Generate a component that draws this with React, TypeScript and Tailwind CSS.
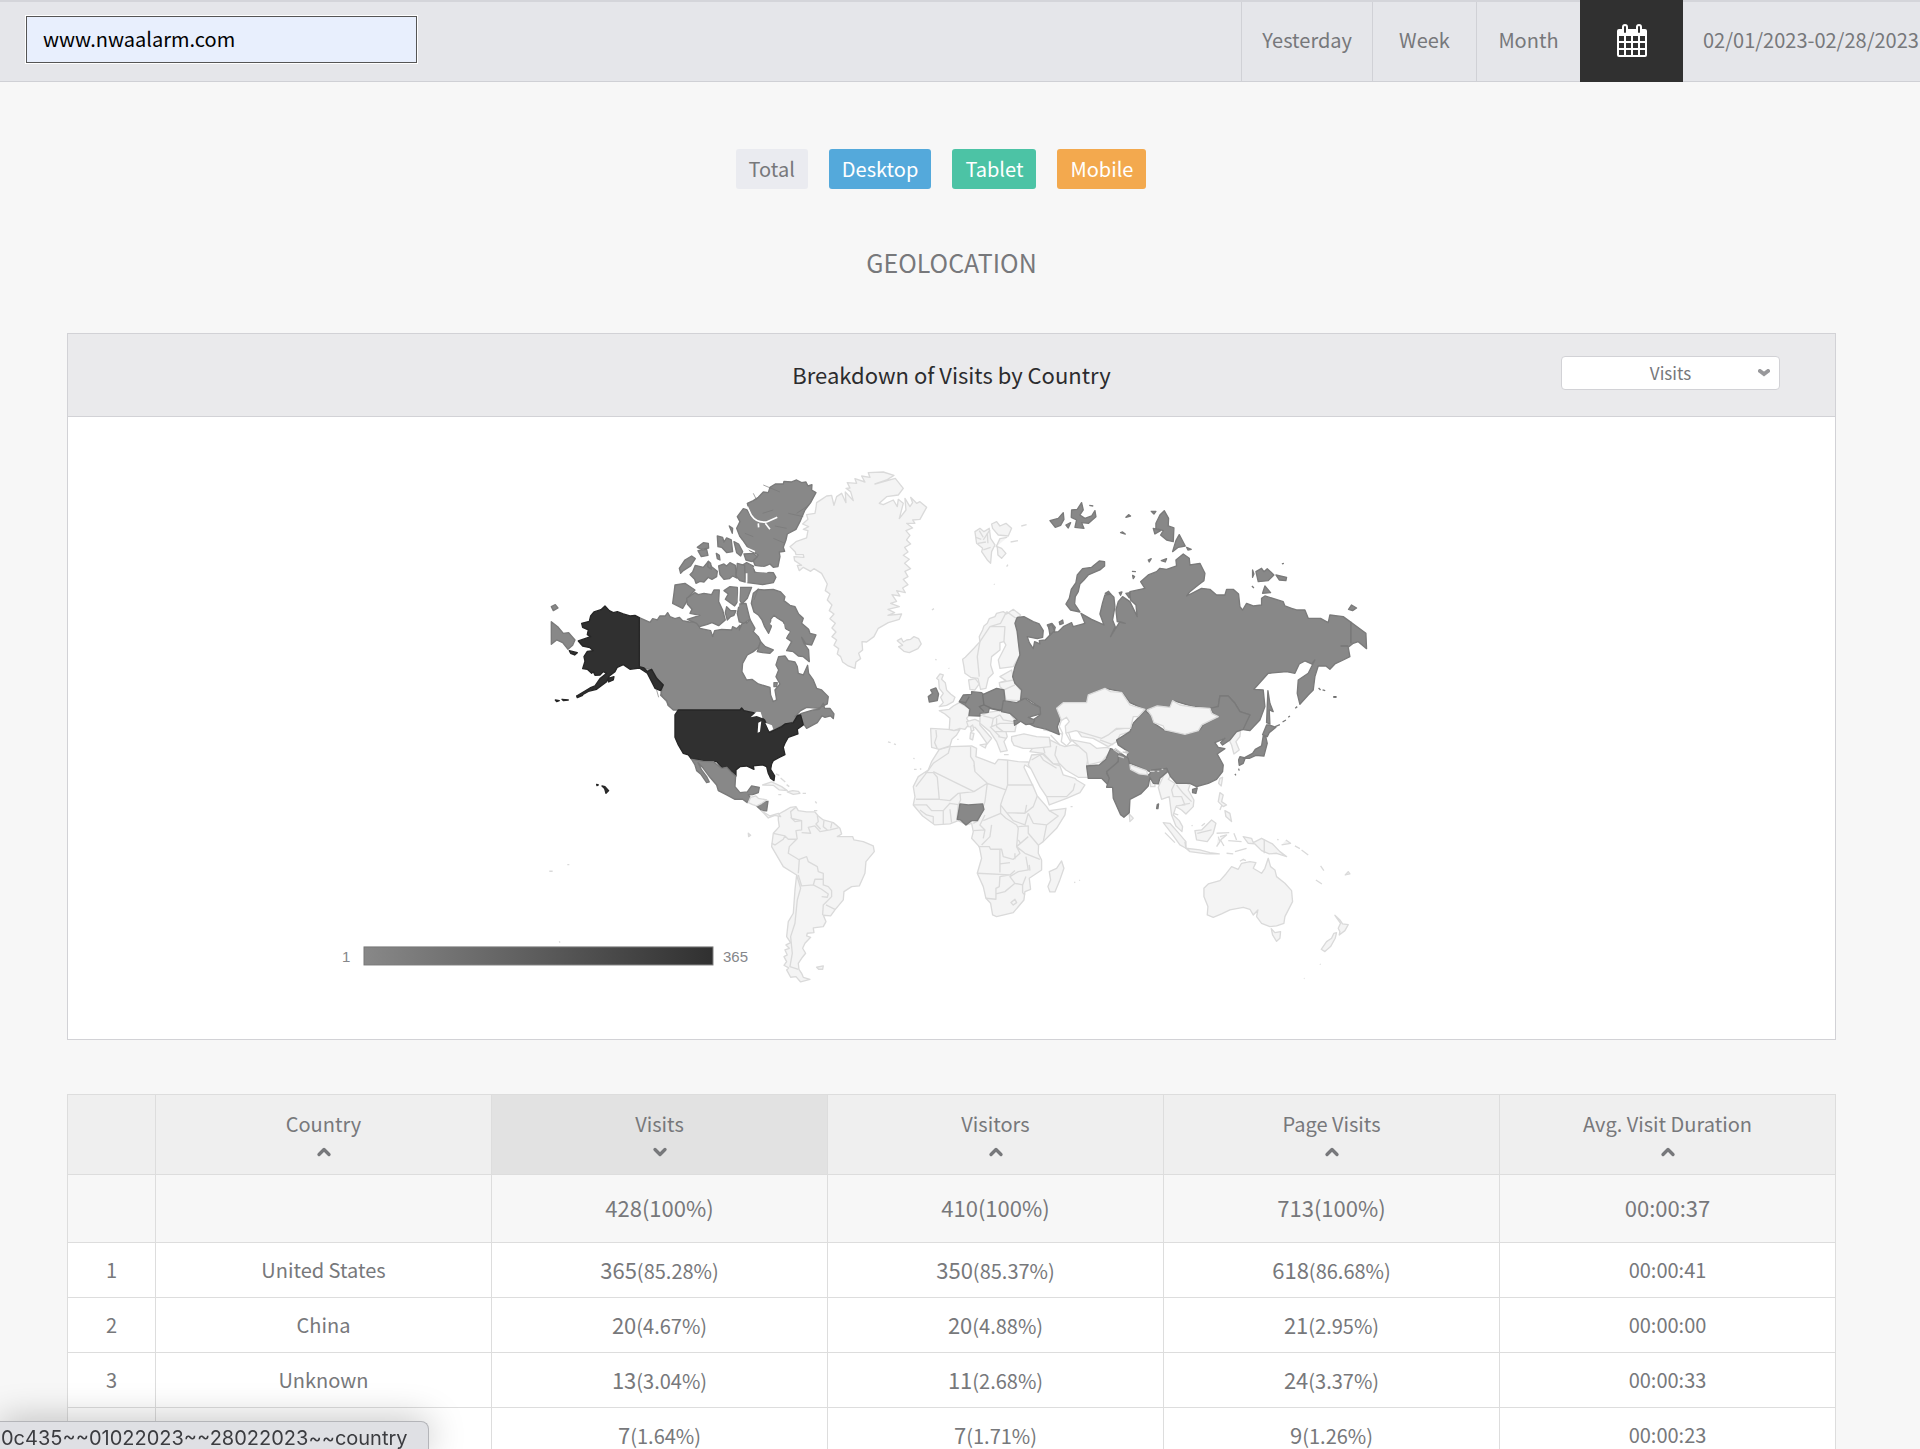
import { ChevronDown, ChevronUp } from 'lucide-react';

const ranges = ['Yesterday', 'Week', 'Month'];

const devices = [
  { label: 'Total', className: 'bg-[#eaebf0] text-[#77787b]' },
  { label: 'Desktop', className: 'bg-[#54a9db] text-white' },
  { label: 'Tablet', className: 'bg-[#4cc3a5] text-white' },
  { label: 'Mobile', className: 'bg-[#f3a94e] text-white' },
];

const columns = ['Country', 'Visits', 'Visitors', 'Page Visits', 'Avg. Visit Duration'];

const totals = ['', '428(100%)', '410(100%)', '713(100%)', '00:00:37'];

const rows = [
  { country: 'United States', visits: ['365', '85.28%'], visitors: ['350', '85.37%'], pages: ['618', '86.68%'], duration: '00:00:41' },
  { country: 'China', visits: ['20', '4.67%'], visitors: ['20', '4.88%'], pages: ['21', '2.95%'], duration: '00:00:00' },
  { country: 'Unknown', visits: ['13', '3.04%'], visitors: ['11', '2.68%'], pages: ['24', '3.37%'], duration: '00:00:33' },
  { country: '', visits: ['7', '1.64%'], visitors: ['7', '1.71%'], pages: ['9', '1.26%'], duration: '00:00:23' },
];

// North America and Greenland
const greenland =
  'M830 128L845 118 860 108 875 106 882 136 890 110 905 100 918 128 916 96 940 122 932 95 918 85 930 84 922 68 950 70 945 56 975 66 965 48 990 52 985 38 1030 36 1062 46 1040 60 1005 72 1066 55 1090 85 1075 105 1040 110 1018 130 1030 134 1060 120 1072 140 1075 118 1090 130 1078 176 1098 150 1095 115 1110 140 1118 128 1112 112 1130 130 1140 125 1160 142 1140 178 1118 180 1125 190 1100 190 1118 204 1098 212 1110 226 1100 240 1112 252 1094 262 1104 276 1090 286 1108 298 1094 310 1112 326 1095 334 1104 350 1090 358 1104 374 1088 384 1096 398 1070 392 1080 408 1056 404 1070 424 1052 430 1078 440 1044 448 1064 458 1044 466 1085 462 1078 478 1045 488 1015 505 1002 530 980 546 966 545 968 570 956 580 962 596 948 606 945 625 925 618 908 606 902 590 892 582 896 566 882 556 890 540 876 530 888 516 876 504 886 490 870 476 882 462 868 452 876 435 862 420 870 402 856 392 862 372 845 340 822 326 812 334 790 322 778 332 772 316 785 316 764 302 762 290 792 292 790 284 768 284 766 276 750 260 768 245 800 234 804 212 790 208 806 200 788 192 804 178 800 164 825 160 828 144Z';
const iceland = 'M1072 542L1084 535 1090 546 1100 540 1112 538 1122 530 1136 536 1144 552 1134 566 1108 578 1092 574 1076 560 1088 556Z';
const canada =
  'M298 473L330 487 338 476 352 480 360 468 376 468 383 458 390 470 405 476 418 472 428 482 448 486 470 484 480 505 512 512 518 530 524 512 545 508 575 510 578 500 590 506 600 496 598 510 612 478 620 490 630 478 645 505 640 515 655 530 662 545 656 562 640 575 622 585 608 610 606 635 620 660 636 658 655 672 690 682 692 705 700 725 710 720 705 690 720 672 708 650 716 630 708 615 716 590 735 588 745 602 765 606 772 620 775 640 790 645 803 616 806 640 820 660 830 685 845 690 865 710 862 732 835 745 800 742 782 752 765 770 785 760 820 750 838 748 850 730 854 745 870 745 882 762 880 776 872 768 855 772 846 768 832 788 800 805 790 790 778 764 760 785 720 800 690 818 685 795 670 775 645 765 605 752 415 750 400 750 384 736 380 722 362 706 368 680 335 630 298 622Z';
const arctic = [
  'M622 130L640 122 655 112 670 96 685 98 690 82 706 72 730 72 732 64 755 66 770 60 785 68 798 66 804 78 816 74 815 90 828 98 812 128 795 150 780 185 768 208 742 222 738 240 730 262 734 274 718 276 720 290 714 320 700 322 690 312 672 320 645 316 640 302 655 285 630 272 608 240 600 230 590 205 600 185 592 170 610 146 622 150 632 168Z',
  'M600 320L620 308 640 318 644 336 700 338 708 352 700 368 668 374 640 370 622 368 614 345Z',
  'M532 228L548 232 552 246 560 234 574 240 578 275 560 278 545 262 534 260Z',
  'M582 245L596 252 608 275 602 288 590 278Z',
  'M612 282L640 280 652 290 636 305 618 300Z',
  'M472 262L490 248 505 250 506 264 484 268Z',
  'M474 272L500 268 504 286 484 290Z',
  'M418 325L435 300 455 288 466 296 452 318 430 332 422 340Z',
  'M450 344L458 336 466 316 490 322 505 304 515 320 532 334 530 350 516 358 505 352 492 366 480 364 468 370 464 358Z',
  'M536 318L552 312 560 318 570 308 586 316 590 354 578 348 568 356 552 358 540 344Z',
  'M592 310L614 316 616 366 600 362 588 348Z',
  'M505 304L512 310 514 328 503 320Z',
  'M568 198L578 205 577 220Z',
  'M529 280L538 286 540 300 532 296Z',
  'M405 375L435 370 465 390 445 412 440 425 428 445 398 430 402 400Z',
  'M442 432L440 415 465 398 475 404 492 400 515 404 522 390 538 390 536 425 548 450 556 480 536 497 516 488 500 494 478 500 470 490 442 478 480 466 450 460 456 448Z',
  'M552 392L570 380 592 382 597 420 584 438 556 418 565 402Z',
  'M600 382L635 382 622 415 606 432 599 420Z',
  'M560 440L572 452 588 452 582 466 572 470 562 480 556 458Z',
  'M598 432L618 430 630 478 612 490 598 486 592 460Z',
  'M640 400L655 388 672 390 700 388 722 396 735 410 732 422 750 436 765 440 776 462 790 475 785 490 806 508 810 520 828 525 815 555 798 552 785 532 792 550 806 570 808 605 790 590 775 588 760 575 740 572 755 545 740 535 750 515 735 505 730 485 712 474 702 466 692 478 694 500 686 520 674 500 666 480 656 466 642 456 634 430Z',
  'M652 575L662 545 676 560 700 570 690 580 668 578Z',
  'M702 668L712 668 710 680 702 680Z',
];
const siberiaEdge = 'M34 485L55 502 70 520 86 518 105 540 98 556 84 568 68 548 50 540 34 553ZM34 440L46 434 54 444 40 452Z';
const usa =
  'M415 750H600L605 744 612 752 640 758 668 776 674 780 688 818 725 800 735 792 760 788 772 768 782 765 790 795 772 808 774 822 745 832 735 850 730 862 735 884 718 892 700 902 695 912 692 928 704 948 702 962 692 955 685 940 680 920 668 915 640 918 642 928 620 918 600 920 588 930 588 948 575 945 562 925 545 922 530 905 490 905 475 898 455 898 445 885 430 880 415 855 405 832 405 765Z';
const alaska =
  'M298 473L285 466 270 468 250 462 232 455 220 458 208 452 195 438 183 449 162 456 152 468 148 484 125 490 128 502 145 510 142 524 152 530 115 543 128 558 150 563 160 572 142 574 132 590 135 604 128 626 142 628 155 640 160 635 165 646 180 645 190 635 200 640 180 656 165 678 150 684 110 708 125 706 145 694 170 688 200 665 208 648 225 635 232 622 250 614 270 628 298 624 322 640 335 665 345 685 362 692 370 675 350 655 335 628 322 634 312 624 298 620Z M205 655L222 650 220 660 206 666Z M88 572L112 578 104 585 92 580Z M46 720L58 722 50 725Z M66 718L85 720 70 722Z M110 708L128 706 112 713Z';
const lakes =
  'M632 772L650 755 662 756 668 775 650 768Z M655 788L664 784 660 815 653 818Z M676 788L696 796 700 808 688 814 Z';

// Lower Americas
const mexico =
  'M455 208L490 214 520 215 545 235 560 232 575 248 587 258 585 290 600 308 622 306 635 288 658 292 655 308 638 314 625 315 632 324 622 338 608 328 585 328 560 315 535 302 530 285 510 262 490 235 474 218 485 240 500 260 508 276 500 278 482 252 470 242 465 225Z';
const nicaragua = 'M650 348L670 335 684 334 680 363 665 362Z';
const hawaii = 'M186 288L195 290 206 302 198 310 194 296ZM170 283L175 285 171 287Z';
const southAmerica =
  'M715 373L735 362 752 352 768 350 775 362 800 366 825 366 835 378 850 390 880 398 900 415 905 432 892 440 938 440 942 450 970 455 1000 468 1003 485 978 515 975 550 958 588 935 590 912 605 910 630 885 660 872 678 850 676 858 695 850 710 820 714 822 728 802 730 800 738 812 742 795 760 788 775 797 790 785 805 775 820 777 838 785 850 790 862 810 868 782 876 768 860 752 862 740 840 746 834 732 826 740 815 732 800 742 795 735 780 748 775 738 765 752 758 740 740 745 695 760 670 765 600 770 555 730 530 695 470 700 430 718 410 715 390Z';
const southAmericaBorders =
  'M770 555L782 595 772 630 765 700 752 740 757 790 750 830 775 838M768 352L752 365 755 385 785 392 785 420 768 422 772 448M785 428L812 430 805 412 825 408 840 425 870 420 895 414M832 376L835 395 828 402 842 418M852 392L850 410 862 420M876 398L872 415M700 430L735 438 730 448 705 465 695 460M735 438L745 448 770 448 748 470 745 490 770 505 778 510 775 550M778 508L800 500 805 515 832 530 835 545 850 550 850 568 825 568 820 585 785 588 775 555M820 585L845 598 865 612 862 622 845 620M850 568L850 585 865 590 875 602 875 620 850 645 848 675M858 645L885 658M752 382L765 395 785 392';
const caribbean = [
  'M625 338L632 322 648 318 655 325 680 330 665 340 650 348 638 344Z',
  'M665 363L690 378 715 370 722 380 705 376 685 384Z',
  'M668 285L695 276 725 290 742 302 718 300 700 286Z',
  'M742 306L758 302 775 304 780 310 760 313Z',
  'M788 310L798 310M715 314L724 314M708 252L718 256M722 264L736 276M740 284L748 290M826 334L830 340M822 362L832 362',
  'M625 430L632 436 626 440ZM28 544L38 544M82 524L88 524M58 754L60 758M1044 156L1052 158M1062 162L1068 164M830 832L850 828 848 838 836 838Z',
];

// Northern Eurasia
const russia =
  'M345 490L352 472 372 470 400 485 418 492 430 512 428 532 412 536 382 530 388 548 400 566 404 545 420 552 418 542 436 540 455 520 442 495 456 490 466 502 462 516 475 515 490 500 515 488 520 500 555 490 543 460 575 478 612 495 600 462 608 428 615 405 632 402 642 412 645 440 638 480 646 500 632 530 652 498 660 485 676 490 652 485 648 450 655 425 668 410 690 425 712 470 708 435 692 420 690 395 735 385 722 365 745 345 770 335 780 325 800 328 830 318 828 300 850 282 868 295 870 315 900 310 915 340 912 362 895 375 870 395 860 408 905 385 930 388 950 405 975 405 980 388 1000 388 1016 402 1020 440 1028 450 1040 430 1060 438 1085 435 1085 415 1095 408 1150 425 1155 438 1175 445 1190 450 1215 450 1225 475 1262 475 1285 488 1290 465 1330 470 1398 520 1400 566 1375 545 1360 550 1345 562 1350 590 1330 600 1305 612 1290 628 1278 618 1255 618 1245 650 1240 690 1225 705 1200 733 1192 700 1195 660 1225 640 1245 600 1235 612 1215 603 1198 612 1185 640 1160 635 1105 640 1062 688 1090 690 1095 740 1080 780 1050 812 1025 808 1050 765 1020 755 1005 730 985 708 960 708 955 740 930 745 880 740 820 722 805 745 735 750 705 735 690 728 665 695 615 685 565 705 560 728 500 728 470 745 482 775 472 800 478 824 440 808 405 800 385 790 420 765 420 742 380 715 362 720 365 690 345 670 338 650 345 620 360 585 355 545 352 515Z';
const russianIslands = [
  'M598 303L614 305 614 318 600 330 565 345 552 360 540 372 535 395 526 410 524 432 540 456 512 450 498 432 508 415 514 388 528 368 532 345 548 326 575 322Z',
  'M1104 692L1110 730 1120 755 1108 750 1110 792 1100 788Z',
  'M450 182L475 175 490 158 492 178 482 196 466 202ZM515 150L532 148 545 128 550 150 540 165 555 175 575 168 585 152 588 170 566 190 545 188 552 205 525 202 530 180 514 172ZM498 195L512 188 505 204Z',
  'M568 136L580 138M678 172L692 168 686 164ZM662 218L676 222 668 216ZM754 154L768 154 762 162Z',
  'M768 190L780 165 793 152 806 175 805 198 822 204 820 245 800 240 782 225 790 212 768 205ZM760 205L782 212 765 222Z',
  'M838 224L856 258 835 262 818 275 828 242ZM860 262L874 268 864 270Z',
  'M745 300L754 296 748 306ZM784 302L800 296 796 306ZM696 334L708 335M698 346L704 350 700 356Z',
  'M1068 335L1085 325 1092 335 1102 326 1122 345 1105 362 1075 365ZM1058 330L1062 342 1058 352ZM1128 345L1160 352 1158 362 1138 360ZM1095 378L1112 398 1088 400ZM1056 378L1062 384M1146 312L1152 310',
  'M1346 448L1355 435 1370 444 1358 452ZM446 500L455 492 464 512 450 525ZM478 486L488 480 490 490 480 494ZM616 400L626 394 632 402ZM658 398L666 396 662 406ZM678 400L690 398 688 414Z',
];
const japan =
  'M1100 795L1108 795 1128 802 1108 818 1102 830 1088 824ZM1090 828L1098 832 1102 850 1092 888 1068 886 1048 895 1030 895 1058 880 1066 868 1085 858ZM1020 890L1036 894 1030 910 1018 916 1016 900ZM1126 800L1140 794M1148 786L1158 780M1165 772L1170 768M1186 745L1192 740M1016 926L1018 932M1005 942L1008 946M1256 684L1262 690M1268 690L1276 692';
const china =
  'M650 840L690 815 700 790 735 752 760 770 762 790 795 812 855 823 900 810 910 795 950 772 930 745 955 740 960 708 985 708 1005 730 1020 755 1050 765 1030 808 1010 815 990 840 968 855 962 848 975 835 945 848 955 862 975 866 952 882 962 900 970 915 968 935 950 958 925 970 890 980 870 970 830 970 812 950 800 925 775 932 750 935 715 920 690 910 680 895 685 875 655 855ZM878 988L892 984 888 1000 878 998Z';
const mongolia = 'M742 750L772 738 810 742 818 722 840 735 885 742 930 745 935 760 955 770 905 795 895 812 855 823 795 810 790 798 762 788 755 768Z';
const kazakhstan =
  'M470 745L490 728 560 728 565 705 615 685 632 695 665 697 690 735 735 748 715 770 700 770 692 805 650 805 625 825 605 835 570 825 528 812 495 820 482 775Z';
const centralEurope =
  'M178 725L190 705 215 703 215 695 245 698 250 703 290 685 312 690 315 720 310 745 300 752 268 745 265 757 240 760 240 768 207 767 210 748 195 735Z';
const centralEuropeBorders = 'M208 710L195 732M248 703L252 735 238 740 252 755M252 735L275 745 305 752M178 725L200 728';
const ukraine = 'M310 722L350 728 375 715 395 730 420 742 422 762 385 772 404 780 400 790 378 794 362 784 344 796 342 782 352 780 330 760 305 755Z';
const ireland = 'M85 710L98 700 92 690 108 684 116 702 112 722 88 726Z';
const scandinavia =
  'M188 598L196 592 222 565 240 545 238 530 248 510 252 498 262 490 268 476 285 470 290 460 310 455 320 462 340 448 362 465 348 480 350 515 356 545 360 585 340 620 300 625 295 600 318 555 312 545 300 548 300 570 275 590 272 615 280 640 265 655 258 685 242 688 234 655 212 652 195 640 192 620Z';
const westEurope = [
  'M118 740L130 728 122 712 130 700 118 685 116 660 110 655 120 642 130 645 125 658 136 668 140 690 152 702 165 712 160 725 140 736Z',
  'M118 752L148 748 160 738 178 728 208 745 207 767 200 775 210 790 195 808 180 805 162 812 148 808 150 775 135 762Z',
  'M92 805L145 808 162 812 180 808 170 825 156 838 150 858 118 868 95 862Z',
  'M200 785L225 778 240 785 240 795 262 820 275 835 262 852 240 820 225 802 205 800Z',
  'M206 660L226 656 238 672 225 690 210 688Z',
  'M300 650L335 630 340 652 345 670 365 695 360 722 318 720 312 690 300 680 298 668 318 662Z',
  'M240 768L265 757 300 752 330 760 350 788 345 815 318 815 322 830 312 845 322 872 302 876 290 845 270 815 240 790Z',
  'M335 830L372 822 410 830 448 832 452 860 400 865 370 865 342 856 335 842Z',
  'M212 800L218 795 222 810 214 815ZM212 818L222 820 218 840 210 836ZM172 838L176 838M240 855L260 852 256 864ZM312 884L326 884',
];
const europeBorders =
  'M240 545L232 590 238 650M320 455L302 490 270 500 240 545M270 500L315 500 312 545M320 455L348 475M300 668L340 660M312 690L345 675M108 810L110 830 104 848 112 866M250 768L280 775 300 765M280 775L275 800 300 790 345 790M290 775L290 800 310 815M270 800L300 830M285 815L320 815M300 765L310 780 340 785M295 830L320 835';
const svalbard = [
  'M225 215L240 205 252 215 268 205 272 235 285 255 275 275 272 310 262 300 245 275 248 265 230 250Z',
  'M275 192L290 185 300 198 318 190 335 205 325 228 295 225 278 205ZM292 260L305 265 318 280 305 295 294 285Z',
  'M364 198L380 194M332 246L354 242M320 320L324 314M282 372L284 374M96 450L102 446M106 598L110 600M146 624L148 626M270 210L250 240',
  'M228 232L244 238M238 212L250 232M250 270L272 262M262 220L264 250M234 250L258 246M288 262L300 236 322 232',
];

// Africa, South Asia and Oceania
const africa =
  'M118 178L150 170 215 168 230 175 228 200 250 208 285 222 295 208 320 210 355 215 385 216 392 235 375 225 372 232 400 290 412 318 440 350 448 362 498 355 495 375 470 415 430 455 416 465 415 490 425 510 425 540 388 565 392 598 375 605 372 630 340 668 290 680 278 675 272 640 258 625 250 590 232 550 245 505 238 470 215 445 220 425 215 400 200 405 175 392 150 402 105 405 68 378 40 345 45 320 40 290 55 260 85 240 95 215Z';
const africaBorders =
  'M150 172L145 190 100 220 75 255 48 290M100 245L222 305M75 248H100L112 262 118 328 48 328M118 328L150 332 175 310 222 305 262 280 225 245 222 215 212 200 212 170M225 245L222 225M262 280L318 300 323 285V210M323 285H400M318 300L310 320 302 345 320 368 375 370 400 350 412 318M262 280L255 335 250 350M180 308L182 330 175 345M40 345L80 345 95 362 130 362 150 340 180 345M60 360L80 375 100 380 100 402M130 362V402M150 358L155 398M175 345L170 392M250 350L235 392 220 400M250 392L302 370 302 345M255 375L240 405 255 420 220 422M320 368L340 392 375 405 385 370M375 370L380 345M448 362L475 378 440 405 400 400 385 370M440 405L430 455M355 410L385 408 385 430 415 465M302 370L318 385 350 405 355 415 350 470 360 490 340 508 310 500 305 478 272 478 268 470 235 470M275 405L270 440 245 465M255 420L250 445M350 470L385 440M350 470L375 490 420 508M232 550L330 555 345 542M300 480V548M330 518L300 522M345 508V490M378 500L385 540 355 545 330 560 345 580 368 585 378 560M330 555L300 560 298 590 288 595V628L258 625M288 612L315 605 345 580M368 585L368 608 375 615M333 638L345 628 350 638 340 645ZM388 525L390 542M355 450L362 460';
const nigeria = 'M180 342L205 345 248 342 252 358 232 392 215 392 198 405 182 390 172 388Z';
const middleEast = [
  'M390 185L400 172 450 168 450 150 480 165 495 170 520 165 560 175 565 200 560 228 568 262 535 262 498 240 480 222 460 222 430 190Z',
  'M395 195L428 192 460 222 480 228 490 255 525 265 530 270 555 285 540 308 500 325 448 345 440 320 420 290 395 240 385 225Z',
  'M500 108L530 118 545 140 580 145 625 170 650 155 660 135 690 125 700 112 650 118 610 142 570 130 540 95 510 105Z',
  'M515 150L570 160 590 175 620 172 638 178 605 215 565 225 560 190Z',
];
const middleEastBorders = 'M430 170L435 190M470 168L465 195 480 225M395 210L420 195 430 210 470 235M440 320L500 320 520 300 525 280M600 150L640 165M452 135L480 165M495 135L460 125 430 120M500 110L515 155';
const pakistan = 'M560 228L598 225 618 208 632 176 655 185 660 208 640 232 620 250 630 265 628 288 605 265 565 265Z';
const india =
  'M620 245L655 215 655 185 685 205 690 228 720 245 748 255 755 240 800 235 803 245 780 265 775 282 760 280 750 262 745 288 722 312 690 328 688 368 672 382 662 374 640 325 638 292 620 292 628 265Z';
const nepal = 'M690 224L740 242 743 255 718 252 692 238Z';
const southEastAsia = [
  'M800 238L812 258 805 268 825 280 850 275 870 285 865 300 882 330 880 350 858 372 845 360 828 350 820 375 838 392 848 410 846 425 828 408 815 375 808 320 785 328 775 292Z',
  'M750 265L765 275 765 290 752 290Z',
  'M790 398L810 400 835 428 858 455 858 475 840 465 815 430Z',
  'M858 475L900 480 930 488 958 492 920 492 870 485Z',
  'M885 422L905 420 935 390 948 400 940 430 922 455 890 450Z',
  'M950 430L988 428M955 440L960 455 950 470M960 440L980 435 962 450 972 468M960 308L970 315 965 335 980 345 970 350 955 335ZM975 362L990 370 995 395 978 380Z',
  'M960 265L968 262 964 288 956 280ZM688 372L700 385 690 395Z',
  'M1030 440L1055 445 1060 458 1085 445 1118 462 1140 485 1160 500 1130 490 1108 492 1085 482 1065 462 1045 460Z',
  'M1093 448V490M1145 465L1172 460 1158 450M1185 468L1200 476M1205 480L1225 495M1262 528L1272 542M1248 570L1266 582M1336 555L1345 545 1350 552ZM980 490L1000 492M1005 485L1040 475M1002 430L1010 450M985 452L1025 455M512 350L518 350M523 576L526 578M538 570L540 572M40 205L44 206M42 238L50 238M60 238L64 236M795 428L825 458M1212 865L1214 866M1260 822L1262 824M875 408L878 406M905 408L915 400M1132 448L1136 450M966 345L960 360',
  'M985 145L1000 130 1022 122 1020 140 1008 155 1018 180 1002 192 995 165Z',
];
const asiaBorders = 'M825 280L815 300 820 320 845 320 855 345 828 348M830 285L850 310 875 335M845 345L870 340M820 370L835 375M892 430L935 420M855 455L858 475';
const australia =
  'M912 595L925 582 960 572 978 552 995 530 1015 538 1025 520 1050 515 1068 518 1060 535 1085 550 1095 535 1105 505 1112 530 1125 540 1130 560 1155 580 1175 602 1178 635 1155 680 1152 700 1130 708 1110 710 1085 700 1070 680 1074 660 1060 675 1050 658 1030 652 990 660 965 672 940 682 922 675 924 650 912 620Z';
const oceania = [
  'M1114 716L1125 728 1142 725 1140 745 1130 754 1118 735Z',
  'M1305 676L1320 690 1328 702 1345 704 1335 722 1318 735 1320 725 1315 715 1322 700Z',
  'M1310 728L1306 745 1292 770 1275 785 1264 778 1280 755 1295 745 1302 730Z',
  'M485 513L492 535 478 575 465 606 450 606 444 590 452 570 448 545 470 535Z',
  'M1020 514L1030 508 1038 512',
];
const kashmir = 'M640 178L658 190M645 175L665 190M655 198L672 204M668 186L684 190M675 182L686 188M772 244L778 244M785 238L790 238M750 244L764 244';

const light = 'fill-[#f4f4f4] stroke-[#dadada]';
const mid = 'fill-[#888888] stroke-[#7a7a7a]';
const dark = 'fill-[#303030] stroke-[#262626]';

function Shapes({ items, className }: { items: string[]; className: string }) {
  return (
    <g className={className}>
      {items.map((d) => (
        <path key={d} d={d} />
      ))}
    </g>
  );
}

function WorldMap() {
  return (
    <svg viewBox="333 417 1237 622" className="block h-auto w-[70%]" role="img" aria-label="Visits by country">
      <defs>
        <linearGradient id="scale">
          <stop offset="0" stopColor="#888888" />
          <stop offset="1" stopColor="#303030" />
        </linearGradient>
      </defs>
      {/* shapes are drawn at three units to the pixel */}
      <g transform="translate(540 460) scale(.33333)" strokeWidth="4" strokeLinejoin="round">
        <Shapes items={[greenland, iceland]} className={light} />
        <Shapes items={[canada, ...arctic, siberiaEdge]} className={mid} />
        <path d="M622 140L634 166Q650 190 680 186L712 172M655 190L656 202M676 190L690 208M590 225L615 262 645 275M598 375L595 440M620 340V368" className="fill-none stroke-white" strokeWidth="5" />
        <path d="M700 475L712 480 722 500 732 490 735 508 750 515 738 530 732 545 715 548 705 558 692 545 682 540 700 520 702 500 690 492Z M640 322L680 320 700 326 680 338 650 336Z" className="fill-white stroke-none" />
        <path d="M350 690L356 712M362 695L370 715 388 735M640 100L650 120M700 150L668 160M740 205L705 198M770 160L808 135M700 235L735 250M640 230L615 220M790 170L745 160M670 75L720 96M655 385L642 420" className="fill-none stroke-[#777777]" strokeWidth="2" />
        <Shapes items={[usa, alaska]} className={dark} />
        <path d={lakes} className="fill-white" />
        <g transform="translate(0 690)">
          <Shapes items={[mexico, nicaragua]} className={mid} />
          <Shapes items={[hawaii]} className={dark} />
          <Shapes items={[southAmerica, ...caribbean]} className={light} />
          <path d={southAmericaBorders} className="fill-none stroke-[#dadada]" />
        </g>
        <g transform="translate(1080 690)">
          <Shapes items={[africa, ...middleEast, ...southEastAsia, australia, ...oceania]} className={light} />
          <path d={africaBorders + middleEastBorders + asiaBorders} className="fill-none stroke-[#dadada]" />
        </g>
        <g transform="translate(1080 0)">
          <Shapes items={[scandinavia, ...westEurope, ...svalbard]} className={light} />
          <path d={europeBorders} className="fill-none stroke-[#dadada]" />
          <Shapes items={[russia, ...russianIslands, china, japan, centralEurope, ukraine, ireland]} className={mid} />
          <path d={centralEuropeBorders + 'M1353 485V550M1322 558H1345'} className="fill-none stroke-[#757575]" />
          <Shapes items={[kazakhstan, mongolia]} className={light} />
          <path d="M484 782L500 772 508 785 496 798 498 820 512 845 500 858 484 845 488 820 478 800Z" className="fill-white stroke-[#dadada]" />
          <path d="M1300 711H1310" className="stroke-[#303030]" />
        </g>
        <g transform="translate(1080 690)">
          <Shapes items={[nigeria, pakistan, india, 'M772 344L776 342 774 356 770 356Z']} className={mid} />
          <Shapes items={[nepal]} className={light} />
          <path d={kashmir} className="fill-none stroke-[#cccccc]" />
        </g>
      </g>
      <rect x="364" y="947" width="349" height="18" fill="url(#scale)" stroke="#777777" strokeWidth="1" />
      <g className="fill-[#85868a] font-['Liberation_Sans',sans-serif] text-[15px]">
        <text x="342" y="962">1</text>
        <text x="723" y="962">365</text>
      </g>
    </svg>
  );
}

function CalendarIcon() {
  return (
    <svg viewBox="0 0 32 34" className="h-[34px] w-8" aria-hidden="true">
      <rect x="1" y="5" width="30" height="28" rx="2" fill="white" />
      <path d="M9 3V8M23 3V8" stroke="white" strokeWidth="6" strokeLinecap="round" />
      <path d="M9 3V8M23 3V8" stroke="#303030" strokeWidth="2" strokeLinecap="round" />
      {[12, 19, 26].map((y) =>
        [3, 10, 17, 24].map((x) => <rect key={`${x}-${y}`} x={x} y={y} width="5" height="5" fill="#303030" />),
      )}
    </svg>
  );
}

function Count({ value }: { value: string[] }) {
  return (
    <td className="border border-[#dddddd] p-0 text-[22px]">
      {value[0]}
      <span className="text-[20px]">({value[1]})</span>
    </td>
  );
}

export default function App() {
  return (
    <div className="h-screen overflow-hidden bg-[#f7f7f7] font-['Noto_Sans_CJK_SC',sans-serif] text-[#77787b]">
      <header className="flex h-[82px] items-stretch justify-between border-t-2 border-b border-t-[#d4d5da] border-b-[#cfd0d5] bg-[#e5e6ea] text-[20px] whitespace-nowrap">
        <div className="flex items-center pb-1 pl-[26px]">
          <input
            aria-label="Site"
            defaultValue="www.nwaalarm.com"
            className="h-[47px] w-[391px] border border-[#555555] bg-[#e8effd] px-4 pb-0.5 text-black outline outline-white"
          />
        </div>
        <nav className="flex items-stretch">
          {ranges.map((range) => (
            <button key={range} className="min-w-[104px] border-l border-[#d0d1d6] px-5 pb-1">
              {range}
            </button>
          ))}
          <button aria-label="Pick dates" className="-mt-0.5 -mb-px flex w-[103px] items-center justify-center bg-[#303030]">
            <CalendarIcon />
          </button>
          <span className="flex w-[237px] items-center pb-1 pl-5">02/01/2023-02/28/2023</span>
        </nav>
      </header>

      <main className="pr-[84px] pl-[67px]">
        <div className="flex justify-center pt-[67px] text-[20px] leading-10">
          {devices.map((device) => (
            <button key={device.label} className={`mr-[21px] h-10 rounded-[3px] px-[13px] ${device.className}`}>
              {device.label}
            </button>
          ))}
        </div>

        <h1 className="pt-[53px] text-center text-[25px] leading-10">GEOLOCATION</h1>

        <section className="mt-[51px] border border-[#d2d2d6] bg-white">
          <div className="grid h-[83px] grid-cols-[1fr_auto_1fr] items-center border-b border-[#d2d2d6] bg-[#eaeaec]">
            <h2 className="col-start-2 pb-0.5 text-[22px] text-[#2c2c2e]">Breakdown of Visits by Country</h2>
            <div className="relative mr-[55px] mb-1 w-[219px] justify-self-end">
              <select
                aria-label="Metric"
                className="h-[34px] w-full appearance-none rounded-[4px] border border-[#d2d2d6] bg-white text-center text-[17px] leading-8"
              >
                <option>Visits</option>
              </select>
              <svg viewBox="0 0 12 8" className="pointer-events-none absolute top-[13px] right-[10px] h-2 w-3" aria-hidden="true">
                <path d="M2 2L6 5 10 2" fill="none" stroke="#98989b" strokeWidth="4" strokeLinecap="round" />
              </svg>
            </div>
          </div>
          <div className="flex justify-center">
            <WorldMap />
          </div>
        </section>

        <table className="mt-[54px] w-full table-fixed border-collapse text-center text-[20px]">
          <thead>
            <tr className="h-20 bg-[#efefef]">
              <th className="w-[88px] border border-[#dddddd]" />
              {columns.map((column) => {
                const sorted = column === 'Visits';
                const Chevron = sorted ? ChevronDown : ChevronUp;
                return (
                  <th key={column} className={`border border-[#dddddd] p-0 pt-1 font-normal ${sorted ? 'bg-[#e2e2e2]' : ''}`}>
                    <button className="flex w-full flex-col items-center gap-1 leading-7">
                      {column}
                      <Chevron size={20} strokeWidth={4} />
                    </button>
                  </th>
                );
              })}
            </tr>
          </thead>
          <tbody>
            <tr className="h-[68px] bg-[#f7f7f7] text-[22px]">
              <td className="border border-[#dddddd] p-0 pb-0.5" />
              {totals.map((total, i) => (
                <td key={columns[i]} className="border border-[#dddddd] p-0 pb-0.5">
                  {total}
                </td>
              ))}
            </tr>
            {rows.map((row, i) => (
              <tr key={row.duration} className="h-[55px] bg-white leading-8">
                <td className="border border-[#dddddd] p-0">{row.country && i + 1}</td>
                <td className="border border-[#dddddd] p-0">{row.country}</td>
                <Count value={row.visits} />
                <Count value={row.visitors} />
                <Count value={row.pages} />
                <td className="border border-[#dddddd] p-0">{row.duration}</td>
              </tr>
            ))}
          </tbody>
        </table>
      </main>

      <div className="fixed bottom-0 left-0 h-7 w-[429px] overflow-hidden rounded-tr-lg border-t border-r border-[#b4b5b9] bg-[#dfe0e4] pl-px font-['Inter',sans-serif] text-[20px] leading-8 whitespace-nowrap text-[#3b3c40] shadow-[0_0_36px_rgba(0,0,0,0.28)]">
        0c435~~01022023~~28022023~~country
      </div>
    </div>
  );
}
